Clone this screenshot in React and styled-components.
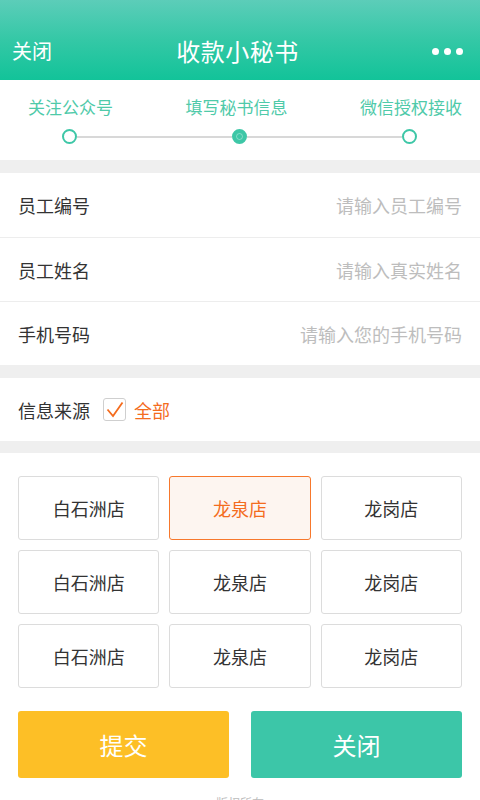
import React from "react";
import styled, { createGlobalStyle } from "styled-components";

const Global = createGlobalStyle`
  html, body { margin: 0; padding: 0; background: #fff; }
  body { font-family: "Noto Sans CJK SC", "Noto Sans", sans-serif; }
  * { box-sizing: border-box; }
`;

const Page = styled.div`
  width: 480px;
  height: 800px;
  overflow: hidden;
  background: #efefef;
  display: flex;
  flex-direction: column;
`;

const Header = styled.header`
  height: 80px;
  flex: none;
  background: linear-gradient(180deg, #5ccdb9 0%, #34c8a6 50%, #12c399 100%);
  display: grid;
  grid-template-columns: 1fr auto 1fr;
  align-items: center;
  padding: 22px 17px 0 12px;
  color: #fff;
`;

const HeaderLeft = styled.div`
  font-size: 20px;
  line-height: 1;
`;

const Title = styled.h1`
  margin: 0;
  font-size: 24px;
  font-weight: 400;
  line-height: 1;
  letter-spacing: 0.5px;
`;

const Dots = styled.div`
  justify-self: end;
  display: flex;
  gap: 5px;
`;

const Dot = styled.span`
  width: 7px;
  height: 7px;
  border-radius: 50%;
  background: #fff;
`;

const Steps = styled.section`
  height: 80px;
  flex: none;
  background: #fff;
  padding-top: 15px;
`;

const StepLabels = styled.div`
  display: flex;
  justify-content: space-between;
  padding: 0 18px 0 28px;
`;

const StepLabel = styled.span`
  font-size: 17px;
  line-height: 24px;
  color: #4fcaa9;
`;

const Track = styled.div`
  display: flex;
  align-items: center;
  padding: 0 63px 0 62px;
  margin-top: 10px;
`;

const Node = styled.span`
  width: 15px;
  height: 15px;
  flex: none;
  border-radius: 50%;
  border: 2px solid #3ec7a7;
  background: ${(p) => (p.$active ? "#3ec7a7" : "#fff")};
  display: flex;
  align-items: center;
  justify-content: center;
  &::after {
    content: "";
    display: ${(p) => (p.$active ? "block" : "none")};
    width: 5px;
    height: 5px;
    border-radius: 50%;
    border: 1px solid rgba(255, 255, 255, 0.35);
  }
`;

const Line = styled.span`
  flex: 1;
  height: 2px;
  background: #d8d8d8;
`;

const Gap = styled.div`
  height: ${(p) => p.$h}px;
  flex: none;
`;

const Block = styled.section`
  background: #fff;
  flex: none;
`;

const Row = styled.div`
  height: 64px;
  display: flex;
  align-items: center;
  justify-content: space-between;
  padding: 0 18px;
  border-top: ${(p) => (p.$first ? "none" : "1px solid #ededed")};
`;

const Label = styled.span`
  font-size: 18px;
  color: #333;
  line-height: 1;
`;

const Input = styled.input`
  border: none;
  outline: none;
  background: transparent;
  text-align: right;
  font-family: inherit;
  font-size: 18px;
  color: #333;
  width: 220px;
  padding: 0;
  &::placeholder { color: #bdbdbd; }
`;

const SourceRow = styled.div`
  height: 63px;
  display: flex;
  align-items: center;
  padding: 0 18px;
  gap: 13px;
`;

const CheckWrap = styled.label`
  display: flex;
  align-items: center;
  gap: 8px;
  color: #f46c1e;
  font-size: 18px;
`;

const CheckBox = styled.span`
  width: 23px;
  height: 23px;
  border: 1px solid #cfcfcf;
  border-radius: 3px;
  display: flex;
  align-items: center;
  justify-content: center;
  background: #fff;
`;

const StoreArea = styled.section`
  flex: 1;
  background: #fff;
  padding: 23px 18px 0;
`;

const StoreGrid = styled.div`
  display: grid;
  grid-template-columns: repeat(3, 1fr);
  column-gap: 10px;
  row-gap: 10px;
`;

const Store = styled.button`
  height: 64px;
  border: 1px solid ${(p) => (p.$on ? "#f7782c" : "#dcdcdc")};
  border-radius: 3px;
  background: ${(p) => (p.$on ? "#fdf5f0" : "#fff")};
  color: ${(p) => (p.$on ? "#f46c1e" : "#333")};
  font-family: inherit;
  font-size: 18px;
  padding: 0;
  cursor: pointer;
`;

const Actions = styled.div`
  display: grid;
  grid-template-columns: 211px 211px;
  justify-content: space-between;
  margin-top: 23px;
`;

const ActionBtn = styled.button`
  height: 67px;
  border: none;
  border-radius: 3px;
  background: ${(p) => p.$bg};
  color: #fff;
  font-family: inherit;
  font-size: 24px;
  padding: 0;
`;

const Footer = styled.div`
  text-align: center;
  margin-top: 16px;
  font-size: 12px;
  color: #bbb;
`;

const stores = [
  ["白石洲店", "龙泉店", "龙岗店"],
  ["白石洲店", "龙泉店", "龙岗店"],
  ["白石洲店", "龙泉店", "龙岗店"],
];

export default function App() {
  return (
    <>
      <Global />
      <Page>
        <Header>
          <HeaderLeft>关闭</HeaderLeft>
          <Title>收款小秘书</Title>
          <Dots>
            <Dot />
            <Dot />
            <Dot />
          </Dots>
        </Header>
        <Steps>
          <StepLabels>
            <StepLabel>关注公众号</StepLabel>
            <StepLabel>填写秘书信息</StepLabel>
            <StepLabel>微信授权接收</StepLabel>
          </StepLabels>
          <Track>
            <Node />
            <Line />
            <Node $active />
            <Line />
            <Node />
          </Track>
        </Steps>
        <Gap $h={13} />
        <Block>
          <Row $first>
            <Label>员工编号</Label>
            <Input placeholder="请输入员工编号" />
          </Row>
          <Row>
            <Label>员工姓名</Label>
            <Input placeholder="请输入真实姓名" />
          </Row>
          <Row>
            <Label>手机号码</Label>
            <Input placeholder="请输入您的手机号码" />
          </Row>
        </Block>
        <Gap $h={13} />
        <Block>
          <SourceRow>
            <Label>信息来源</Label>
            <CheckWrap>
              <CheckBox>
                <svg width="18" height="17" viewBox="0 0 18 17">
                  <path d="M1.5 8.5 L7 15 L16.5 1.5" fill="none" stroke="#f46c1e" strokeWidth="1.8" />
                </svg>
              </CheckBox>
              全部
            </CheckWrap>
          </SourceRow>
        </Block>
        <Gap $h={12} />
        <StoreArea>
          <StoreGrid>
            {stores.flatMap((row, r) =>
              row.map((s, c) => (
                <Store key={`${r}-${c}`} $on={r === 0 && c === 1}>
                  {s}
                </Store>
              ))
            )}
          </StoreGrid>
          <Actions>
            <ActionBtn $bg="#fdbf26">提交</ActionBtn>
            <ActionBtn $bg="#3cc6a8">关闭</ActionBtn>
          </Actions>
          <Footer>版权所有</Footer>
        </StoreArea>
      </Page>
    </>
  );
}
